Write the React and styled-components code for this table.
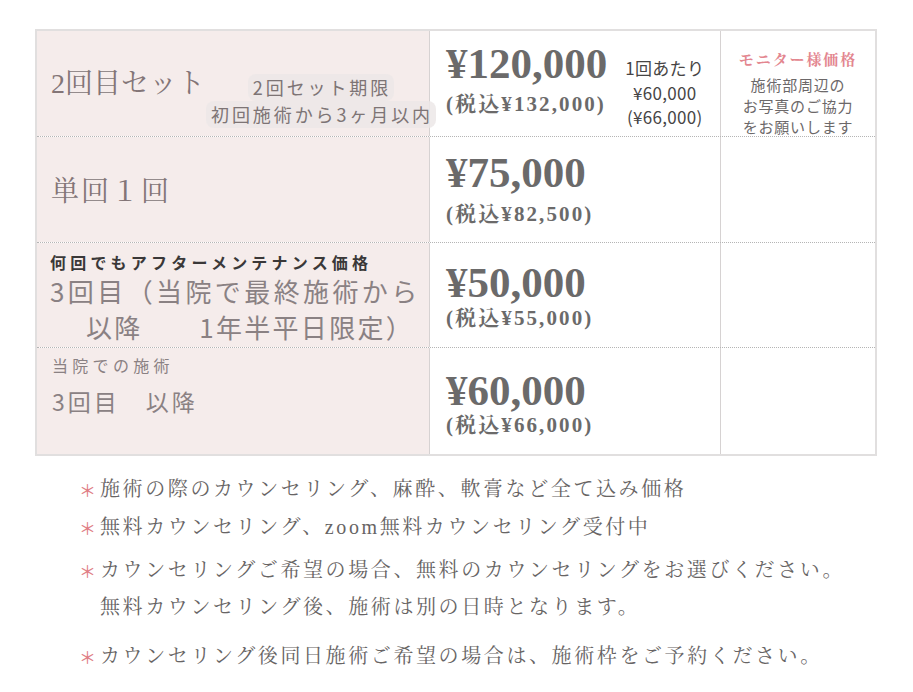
import React from "react";
import styled, { createGlobalStyle } from "styled-components";

const SERIF = `"Liberation Serif", "Noto Serif CJK JP", "Noto Sans CJK JP", serif`;
const SANS = `"Noto Sans CJK JP", "Noto Sans", sans-serif`;

const Global = createGlobalStyle`
  html, body { margin: 0; padding: 0; background: #ffffff; }
  body { font-family: ${SANS}; }
`;

const Page = styled.div`
  width: 913px;
  height: 692px;
  overflow: hidden;
  padding: 29px 0 0 35px;
  box-sizing: border-box;
`;

const Table = styled.div`
  width: 842px;
  border: 2px solid #e1dfdf;
  box-sizing: border-box;
  display: flex;
  flex-direction: column;
`;

const Row = styled.div`
  display: grid;
  grid-template-columns: 393px 291px 1fr;
  grid-template-rows: 100%;
  height: ${(p) => p.$h}px;
  border-bottom: ${(p) => (p.$last ? "none" : "1px dotted #b5b5b5")};
  box-sizing: border-box;
`;

const LabelCell = styled.div`
  position: relative;
  min-height: 0;
  background: #f5eceb;
  border-right: 1px solid #d6d2d2;
  display: flex;
  flex-direction: column;
  padding: ${(p) => p.$top}px 0 0 ${(p) => p.$pl || 14}px;
  box-sizing: border-box;
`;

const SerifLabel = styled.div`
  font-family: ${SERIF};
  font-size: 28px;
  line-height: 36px;
  color: #837577;
  letter-spacing: ${(p) => p.$ls || 0}px;
`;

const SetNote = styled.div`
  position: absolute;
  left: 164px;
  top: 43px;
  width: 240px;
  text-align: center;
  z-index: 2;
  font-family: ${SANS};
  font-size: 18px;
  line-height: 27px;
  letter-spacing: 2.9px;
  color: #7d7475;
`;

const NoteLine = styled.span`
  display: inline-block;
  background: rgba(236, 232, 232, 0.85);
  border-radius: 8px;
  padding: 0 3px 0 5px;
`;

const SmallHead = styled.div`
  font-family: ${SANS};
  font-size: ${(p) => p.$size}px;
  font-weight: ${(p) => (p.$bold ? 700 : 400)};
  line-height: 22px;
  letter-spacing: ${(p) => p.$ls}px;
  color: ${(p) => p.$color};
`;

const BigSans = styled.div`
  font-family: ${SANS};
  font-size: ${(p) => p.$size}px;
  line-height: ${(p) => p.$lh}px;
  letter-spacing: ${(p) => p.$ls}px;
  color: #8a8183;
  padding-left: ${(p) => p.$indent || 0}px;
  margin-top: ${(p) => p.$mt || 0}px;
  white-space: pre;
`;

const PriceCell = styled.div`
  min-height: 0;
  border-right: 1px solid #d6d2d2;
  display: flex;
  align-items: flex-start;
  padding: ${(p) => p.$top}px 0 0 16px;
  gap: 18px;
  box-sizing: border-box;
`;

const PriceBlock = styled.div`
  display: flex;
  flex-direction: column;
`;

const Price = styled.div`
  font-family: ${SERIF};
  font-weight: 700;
  font-size: 43px;
  line-height: 40px;
  color: #6b6a6a;
`;

const TaxPrice = styled.div`
  font-family: ${SERIF};
  font-weight: 700;
  font-size: 21px;
  line-height: 26px;
  letter-spacing: 2.1px;
  color: #6b6a6a;
  margin-top: ${(p) => p.$gap}px;
`;

const PerTime = styled.div`
  font-family: ${SANS};
  font-size: 17px;
  line-height: 24.5px;
  letter-spacing: 0.3px;
  color: #474545;
  text-align: center;
  margin-top: 12px;
`;

const MonitorCell = styled.div`
  min-height: 0;
  text-align: center;
  padding-top: 18px;
  box-sizing: border-box;
`;

const MonitorTitle = styled.div`
  font-family: ${SERIF};
  font-weight: 700;
  font-size: 15px;
  line-height: 22px;
  letter-spacing: 1.9px;
  color: #e3868f;
  margin-bottom: 3px;
`;

const MonitorText = styled.div`
  font-family: ${SANS};
  font-size: 15px;
  line-height: 21px;
  letter-spacing: 0.8px;
  color: #6c6869;
`;

const Notes = styled.ul`
  list-style: none;
  margin: 15px 0 0 44px;
  padding: 0;
`;

const NoteItem = styled.li`
  display: flex;
  margin-top: ${(p) => p.$gap || 0}px;
`;

const Mark = styled.span`
  width: 21px;
  flex: none;
  font-family: ${SANS};
  font-size: 17px;
  line-height: 37px;
  color: #e07e86;
`;

const NoteText = styled.span`
  font-family: ${SERIF};
  font-size: 20px;
  line-height: 37px;
  letter-spacing: 2.6px;
  color: #676464;
`;

export default function App() {
  return (
    <>
      <Global />
      <Page>
        <Table>
          <Row $h={106}>
            <LabelCell $top={35}>
              <SerifLabel>2回目セット</SerifLabel>
              <SetNote>
                <NoteLine>2回セット期限</NoteLine>
                <br />
                <NoteLine>初回施術から3ヶ月以内</NoteLine>
              </SetNote>
            </LabelCell>
            <PriceCell $top={13}>
              <PriceBlock>
                <Price>¥120,000</Price>
                <TaxPrice $gap={7}>(税込¥132,000)</TaxPrice>
              </PriceBlock>
              <PerTime>
                1回あたり
                <br />
                ¥60,000
                <br />
                (¥66,000)
              </PerTime>
            </PriceCell>
            <MonitorCell>
              <MonitorTitle>モニター様価格</MonitorTitle>
              <MonitorText>
                施術部周辺の
                <br />
                お写真のご協力
                <br />
                をお願いします
              </MonitorText>
            </MonitorCell>
          </Row>

          <Row $h={106}>
            <LabelCell $top={37}>
              <SerifLabel $ls={2}>単回１回</SerifLabel>
            </LabelCell>
            <PriceCell $top={16}>
              <PriceBlock>
                <Price>¥75,000</Price>
                <TaxPrice $gap={8}>(税込¥82,500)</TaxPrice>
              </PriceBlock>
            </PriceCell>
            <MonitorCell />
          </Row>

          <Row $h={105}>
            <LabelCell $top={8} $pl={13}>
              <SmallHead $size={16} $bold $ls={4.2} $color="#3a3838">
                何回でもアフターメンテナンス価格
              </SmallHead>
              <BigSans $size={26} $lh={36} $ls={3.4}>
                3回目（当院で最終施術から
              </BigSans>
              <BigSans $size={26} $lh={36} $ls={2.3} $indent={36}>
                {"以降　　1年半平日限定）"}
              </BigSans>
            </LabelCell>
            <PriceCell $top={20}>
              <PriceBlock>
                <Price>¥50,000</Price>
                <TaxPrice $gap={2}>(税込¥55,000)</TaxPrice>
              </PriceBlock>
            </PriceCell>
            <MonitorCell />
          </Row>

          <Row $h={106} $last>
            <LabelCell $top={6} $pl={15}>
              <SmallHead $size={16} $ls={4.3} $color="#8a8183">
                当院での施術
              </SmallHead>
              <BigSans $size={23} $lh={37} $ls={3} $mt={7}>
                {"3回目　以降"}
              </BigSans>
            </LabelCell>
            <PriceCell $top={23}>
              <PriceBlock>
                <Price>¥60,000</Price>
                <TaxPrice $gap={1}>(税込¥66,000)</TaxPrice>
              </PriceBlock>
            </PriceCell>
            <MonitorCell />
          </Row>
        </Table>

        <Notes>
          <NoteItem>
            <Mark>＊</Mark>
            <NoteText>施術の際のカウンセリング、麻酔、軟膏など全て込み価格</NoteText>
          </NoteItem>
          <NoteItem $gap={1}>
            <Mark>＊</Mark>
            <NoteText>無料カウンセリング、zoom無料カウンセリング受付中</NoteText>
          </NoteItem>
          <NoteItem $gap={6}>
            <Mark>＊</Mark>
            <NoteText>
              カウンセリングご希望の場合、無料のカウンセリングをお選びください。
              <br />
              無料カウンセリング後、施術は別の日時となります。
            </NoteText>
          </NoteItem>
          <NoteItem $gap={12}>
            <Mark>＊</Mark>
            <NoteText>カウンセリング後同日施術ご希望の場合は、施術枠をご予約ください。</NoteText>
          </NoteItem>
        </Notes>
      </Page>
    </>
  );
}
